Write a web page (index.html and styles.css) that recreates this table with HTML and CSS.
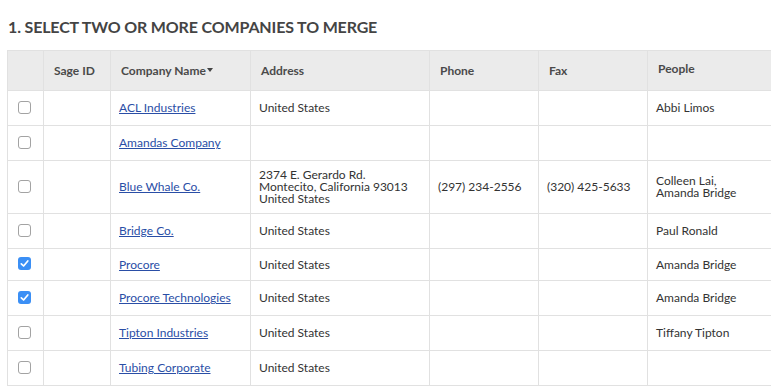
FILE: index.html
```
<!DOCTYPE html>
<html>
<head>
<meta charset="utf-8">
<link rel="stylesheet" href="styles.css">
</head>
<body>
<div class="page">
  <h1 class="title">1. Select two or more companies to merge</h1>
  <table class="grid">
    <colgroup>
      <col class="c-check"><col class="c-sage"><col class="c-name"><col class="c-addr"><col class="c-phone"><col class="c-fax"><col class="c-people">
    </colgroup>
    <thead>
      <tr>
        <th></th>
        <th>Sage ID</th>
        <th>Company Name<span class="caret"></span></th>
        <th>Address</th>
        <th>Phone</th>
        <th>Fax</th>
        <th class="th-people">People</th>
      </tr>
    </thead>
    <tbody>
      <tr>
        <td class="chk"><span class="box"></span></td><td></td>
        <td><a href="#">ACL Industries</a></td><td>United States</td><td></td><td></td><td>Abbi Limos</td>
      </tr>
      <tr>
        <td class="chk"><span class="box"></span></td><td></td>
        <td><a href="#">Amandas Company</a></td><td></td><td></td><td></td><td></td>
      </tr>
      <tr>
        <td class="chk"><span class="box"></span></td><td></td>
        <td><a href="#">Blue Whale Co.</a></td>
        <td>2374 E. Gerardo Rd.<br>Montecito, California 93013<br>United States</td>
        <td>(297) 234-2556</td><td>(320) 425-5633</td><td>Colleen Lai,<br>Amanda Bridge</td>
      </tr>
      <tr>
        <td class="chk"><span class="box"></span></td><td></td>
        <td><a href="#">Bridge Co.</a></td><td>United States</td><td></td><td></td><td>Paul Ronald</td>
      </tr>
      <tr class="short">
        <td class="chk"><span class="box on"><svg viewBox="0 0 13 13" width="13" height="13"><path d="M3.3 6.8 L5.6 9 L9.8 4" fill="none" stroke="#fff" stroke-width="1.7" stroke-linecap="round" stroke-linejoin="round"/></svg></span></td><td></td>
        <td><a href="#">Procore</a></td><td>United States</td><td></td><td></td><td>Amanda Bridge</td>
      </tr>
      <tr>
        <td class="chk"><span class="box on"><svg viewBox="0 0 13 13" width="13" height="13"><path d="M3.3 6.8 L5.6 9 L9.8 4" fill="none" stroke="#fff" stroke-width="1.7" stroke-linecap="round" stroke-linejoin="round"/></svg></span></td><td></td>
        <td><a href="#">Procore Technologies</a></td><td>United States</td><td></td><td></td><td>Amanda Bridge</td>
      </tr>
      <tr>
        <td class="chk"><span class="box"></span></td><td></td>
        <td><a href="#">Tipton Industries</a></td><td>United States</td><td></td><td></td><td>Tiffany Tipton</td>
      </tr>
      <tr>
        <td class="chk"><span class="box"></span></td><td></td>
        <td><a href="#">Tubing Corporate</a></td><td>United States</td><td></td><td></td><td></td>
      </tr>
    </tbody>
  </table>
</div>
</body>
</html>
```
FILE: styles.css
```
html, body {
  margin: 0;
  padding: 0;
  background: #fff;
  overflow: hidden;
}
body {
  font-family: Lato, "Open Sans", Arial, sans-serif;
  color: #333;
}
.page {
  padding: 0 0 0 7px;
}
.title {
  margin: 0;
  padding: 17px 0 0 1px;
  height: 33px;
  font-size: 16px;
  font-weight: 700;
  text-transform: uppercase;
  color: #444;
  line-height: 20px;
  letter-spacing: -0.15px;
}
.grid {
  border-collapse: collapse;
  table-layout: fixed;
  width: 800px;
  font-size: 12px;
}
.c-check { width: 36px; }
.c-sage { width: 67px; }
.c-name { width: 140px; }
.c-addr { width: 179px; }
.c-phone { width: 109px; }
.c-fax { width: 109px; }
.c-people { width: 160px; }
.grid th, .grid td {
  border: 1px solid #e1e1e1;
  text-align: left;
  vertical-align: middle;
}
.grid th {
  background: #ebebeb;
  font-weight: 700;
  color: #4a4a4a;
  height: 40px;
  padding: 0 10px;
  line-height: 14px;
  box-sizing: border-box;
}
.grid th.th-people {
  padding-bottom: 3px;
}
.caret {
  display: inline-block;
  width: 0;
  height: 0;
  border-left: 3.5px solid transparent;
  border-right: 3.5px solid transparent;
  border-top: 4px solid #444;
  vertical-align: 3px;
  margin-left: 1px;
}
.grid td {
  padding: 8px 8px;
  height: 18px;
  line-height: 12px;
  color: #333;
}
.grid tr.short td {
  height: 15px;
}
.grid td a {
  color: #2a4ea6;
  text-decoration: underline;
}
.grid td.chk {
  text-align: center;
  padding: 0;
}
.box {
  display: inline-block;
  width: 11px;
  height: 11px;
  border: 1px solid #a3a3a3;
  border-radius: 3px;
  background: #fff;
  vertical-align: middle;
  position: relative;
  top: -1px;
  left: -1px;
}
.box.on {
  width: 13px;
  height: 13px;
  border: none;
  background: #3b8ff5;
}
.box svg {
  display: block;
}
```
